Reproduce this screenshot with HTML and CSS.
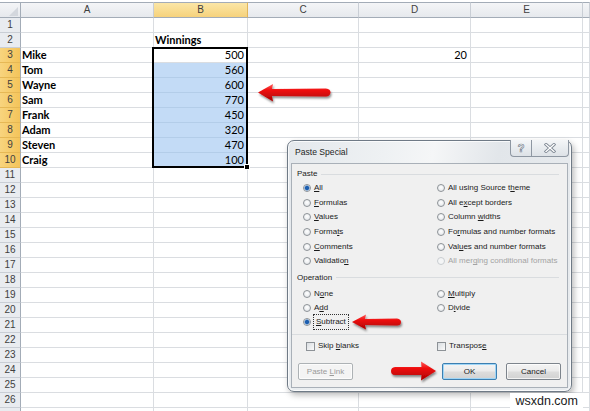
FILE: index.html
```html
<!DOCTYPE html>
<html>
<head>
<meta charset="utf-8">
<link rel="stylesheet" href="styles.css">
</head>
<body>
<div class="sheet">
  <div class="ch corner"></div><div class="ch">A</div><div class="ch on">B</div><div class="ch">C</div><div class="ch">D</div><div class="ch">E</div><div class="ch"></div>
  <div class="rh">1</div><div></div><div></div><div></div><div></div><div></div><div></div>
  <div class="rh">2</div><div></div><div class="b">Winnings</div><div></div><div></div><div></div><div></div>
  <div class="rh on">3</div><div class="b">Mike</div><div class="n act">500</div><div></div><div class="n">20</div><div></div><div></div>
  <div class="rh on">4</div><div class="b">Tom</div><div class="n sel">560</div><div></div><div></div><div></div><div></div>
  <div class="rh on">5</div><div class="b">Wayne</div><div class="n sel">600</div><div></div><div></div><div></div><div></div>
  <div class="rh on">6</div><div class="b">Sam</div><div class="n sel">770</div><div></div><div></div><div></div><div></div>
  <div class="rh on">7</div><div class="b">Frank</div><div class="n sel">450</div><div></div><div></div><div></div><div></div>
  <div class="rh on">8</div><div class="b">Adam</div><div class="n sel">320</div><div></div><div></div><div></div><div></div>
  <div class="rh on">9</div><div class="b">Steven</div><div class="n sel">470</div><div></div><div></div><div></div><div></div>
  <div class="rh on">10</div><div class="b">Craig</div><div class="n sel">100</div><div></div><div></div><div></div><div></div>
  <div class="rh">11</div><div></div><div></div><div></div><div></div><div></div><div></div>
  <div class="rh">12</div><div></div><div></div><div></div><div></div><div></div><div></div>
  <div class="rh">13</div><div></div><div></div><div></div><div></div><div></div><div></div>
  <div class="rh">14</div><div></div><div></div><div></div><div></div><div></div><div></div>
  <div class="rh">15</div><div></div><div></div><div></div><div></div><div></div><div></div>
  <div class="rh">16</div><div></div><div></div><div></div><div></div><div></div><div></div>
  <div class="rh">17</div><div></div><div></div><div></div><div></div><div></div><div></div>
  <div class="rh">18</div><div></div><div></div><div></div><div></div><div></div><div></div>
  <div class="rh">19</div><div></div><div></div><div></div><div></div><div></div><div></div>
  <div class="rh">20</div><div></div><div></div><div></div><div></div><div></div><div></div>
  <div class="rh">21</div><div></div><div></div><div></div><div></div><div></div><div></div>
  <div class="rh">22</div><div></div><div></div><div></div><div></div><div></div><div></div>
  <div class="rh">23</div><div></div><div></div><div></div><div></div><div></div><div></div>
  <div class="rh">24</div><div></div><div></div><div></div><div></div><div></div><div></div>
  <div class="rh">25</div><div></div><div></div><div></div><div></div><div></div><div></div>
  <div class="rh">26</div><div></div><div></div><div></div><div></div><div></div><div></div>
  <div class="rh"></div><div></div><div></div><div></div><div></div><div></div><div></div>
  <span class="selection"><span class="handle"></span></span>
</div>

<div class="dialog">
  <div class="titlebar">
    <span class="title">Paste Special</span>
    <div class="capbtns">
      <span class="capbtn help">?</span>
      <span class="capbtn close"><svg width="12" height="10" viewBox="0 0 12 10"><path d="M2 1.5 L10 8.5 M10 1.5 L2 8.5" stroke="#7d8793" stroke-width="3" stroke-linecap="square"/><path d="M2 1.5 L10 8.5 M10 1.5 L2 8.5" stroke="#fff" stroke-width="1.3" stroke-linecap="square"/></svg></span>
    </div>
  </div>
  <div class="panel">
    <div class="glabel">Paste</div>
    <div class="opts paste">
      <label class="opt"><span class="radio on"></span><span><u>A</u>ll</span></label>
      <label class="opt"><span class="radio"></span><span>All using Source t<u>h</u>eme</span></label>
      <label class="opt"><span class="radio"></span><span><u>F</u>ormulas</span></label>
      <label class="opt"><span class="radio"></span><span>All e<u>x</u>cept borders</span></label>
      <label class="opt"><span class="radio"></span><span><u>V</u>alues</span></label>
      <label class="opt"><span class="radio"></span><span>Column <u>w</u>idths</span></label>
      <label class="opt"><span class="radio"></span><span>Forma<u>t</u>s</span></label>
      <label class="opt"><span class="radio"></span><span>Fo<u>r</u>mulas and number formats</span></label>
      <label class="opt"><span class="radio"></span><span><u>C</u>omments</span></label>
      <label class="opt"><span class="radio"></span><span>Val<u>u</u>es and number formats</span></label>
      <label class="opt"><span class="radio"></span><span>Validatio<u>n</u></span></label>
      <label class="opt disabled"><span class="radio"></span><span>All mer<u>g</u>ing conditional formats</span></label>
    </div>
    <div class="glabel op">Operation</div>
    <div class="opts operation">
      <label class="opt"><span class="radio"></span><span>N<u>o</u>ne</span></label>
      <label class="opt"><span class="radio"></span><span><u>M</u>ultiply</span></label>
      <label class="opt"><span class="radio"></span><span>A<u>d</u>d</span></label>
      <label class="opt"><span class="radio"></span><span>D<u>i</u>vide</span></label>
      <label class="opt"><span class="radio on"></span><span class="focus"><u>S</u>ubtract</span></label>
    </div>
    <div class="sep"></div>
    <div class="checks">
      <label class="opt"><span class="check"></span><span>Skip <u>b</u>lanks</span></label>
      <label class="opt"><span class="check"></span><span>Transpos<u>e</u></span></label>
    </div>
    <div class="buttons">
      <span class="btn disabled"><span>Paste <u>L</u>ink</span></span>
      <span class="spacer"></span>
      <span class="btn default">OK</span>
      <span class="btn">Cancel</span>
    </div>
  </div>
</div>

<svg class="arrows" width="590" height="411" viewBox="0 0 590 411">
  <defs>
    <linearGradient id="red" x1="0" y1="0" x2="0" y2="1">
      <stop offset="0" stop-color="#ff5a5a"/>
      <stop offset="0.35" stop-color="#f01010"/>
      <stop offset="1" stop-color="#a80000"/>
    </linearGradient>
    <filter id="sh" x="-20%" y="-50%" width="140%" height="200%">
      <feDropShadow dx="1" dy="2" stdDeviation="1.2" flood-color="#000" flood-opacity="0.45"/>
    </filter>
  </defs>
  <path filter="url(#sh)" fill="url(#red)" d="M258,92.5 L273,84 L272,89 L326,88.5 Q330.5,89 330.5,92.5 Q330,96.5 326,96.5 L272,96 L273,101.5 Z"/>
  <path filter="url(#sh)" fill="url(#red)" d="M352,322 L366,314.5 L365,319 L397,318.5 Q401,319 401,322 Q401,325.5 397,325.5 L365,325 L366,329.5 Z"/>
  <path filter="url(#sh)" fill="url(#red)" d="M436,371 L421,361.5 L421.5,367 L395,367 Q391,367.5 391,371 Q391,375 395,375 L421.5,375 L421,380.5 Z"/>
</svg>

<div class="watermark">wsxdn.com</div>
</body>
</html>
```
FILE: styles.css
```css
* { box-sizing: border-box; margin: 0; padding: 0; }
html, body { width: 590px; height: 411px; overflow: hidden; }
body {
  position: relative;
  background: #fff;
  padding-top: 2px;
  font-family: "Lato", "Liberation Sans", sans-serif;
}

/* ---------- spreadsheet ---------- */
.sheet {
  position: relative;
  display: grid;
  grid-template-columns: 21px 133px 94px 111px 112px 112px 7px;
  grid-template-rows: 16px;
  grid-auto-rows: 15px;
  font-size: 11px;
  color: #000;
}
.sheet > div {
  border-right: 1px solid #dadde1;
  border-bottom: 1px solid #dadde1;
  line-height: 14px;
  white-space: nowrap;
  overflow: hidden;
  padding: 0 2px;
}
.sheet > .ch {
  background: linear-gradient(#f4f5f7, #e6e9ed);
  border-top: 1px solid #a3acb7;
  border-right-color: #c9ced5;
  border-bottom-color: #a3acb7;
  text-align: center;
  color: #3f3f3f;
  font-family: "Liberation Sans", sans-serif;
  font-size: 10px;
  line-height: 14px;
}
.sheet > .ch.on { background: linear-gradient(#fbe6a6, #f6d27c); border-right-color: #e1b55a; }
.sheet > .corner { position: relative; border-right-color: #a3acb7; }
.sheet > .corner::after {
  content: "";
  position: absolute;
  right: 2px; bottom: 1px;
  width: 0; height: 0;
  border-left: 9px solid transparent;
  border-bottom: 9px solid #d3d7dd;
}
.sheet > .rh {
  background: #e9ecf0;
  border-right-color: #a3acb7;
  border-bottom-color: #c9ced5;
  text-align: center;
  color: #3f3f3f;
  font-family: "Liberation Sans", sans-serif;
  font-size: 10px;
  padding: 0;
}
.sheet > .rh.on { background: linear-gradient(90deg, #f8d47e, #f4c45a); border-bottom-color: #e6b855; }
.sheet > .b { font-weight: bold; padding-left: 1px; overflow: visible; }
.sheet > .n { text-align: right; padding-right: 3px; }
.sheet > .sel { background: #c3dbf6; border-bottom-color: #b3cde9; }
.sheet > .act { background: #fff; }

.selection {
  position: absolute;
  grid-column: 3 / 4;
  grid-row: 4 / 12;
  top: -1px; left: -2px; right: 0; bottom: 0;
  border: 2px solid #000;
  pointer-events: none;
}
.handle {
  position: absolute;
  right: -4px; bottom: -4px;
  width: 6px; height: 6px;
  background: #000;
  border: 1px solid #fff;
}

/* ---------- dialog ---------- */
.dialog {
  position: absolute;
  left: 287px; top: 140px;
  width: 285px; height: 252px;
  border: 1px solid #6f7a86;
  border-radius: 7px;
  background: linear-gradient(100deg, #e4e8ec 0%, #eef1f3 30%, #f5f6f7 45%, #e2e6ea 65%, #e9ecef 100%);
  box-shadow: inset 0 0 0 1px rgba(255,255,255,.75), 2px 3px 6px rgba(0,0,0,.28);
  font-family: "Liberation Sans", sans-serif;
  font-size: 8px;
  color: #1b1b1b;
  display: flex;
  flex-direction: column;
}
.titlebar {
  height: 22px;
  display: flex;
  justify-content: space-between;
  align-items: flex-start;
  padding: 0 2px 0 7px;
}
.title { font-size: 8.6px; line-height: 22px; color: #1e1e1e; }
.capbtns { display: flex; margin-top: -1px; }
.capbtn {
  height: 17px;
  border: 1px solid #8e97a2;
  border-top: none;
  background: linear-gradient(#f4f6f8, #dde2e7);
  display: flex; align-items: center; justify-content: center;
}
.capbtn.help {
  width: 21px;
  border-right: none;
  border-bottom-left-radius: 4px;
  font-weight: bold;
  font-size: 11px;
  color: #fff;
  -webkit-text-stroke: 0.7px #7d8793;
}
.capbtn.close { width: 38px; border-bottom-right-radius: 4px; }

.panel {
  margin: 0 3px;
  height: 225px;
  border: 1px solid #a9b0b8;
  background: #f0f0f0;
  display: flex;
  flex-direction: column;
}
.glabel {
  display: flex;
  align-items: center;
  height: 14px;
  margin-top: 3px;
  padding: 0 8px 0 5px;
  line-height: 14px;
}
.glabel::after {
  content: "";
  flex: 1;
  margin-left: 4px;
  border-top: 1px solid #d9dcdf;
}
.glabel.op { margin-top: 2px; }

.opts {
  display: grid;
  grid-template-columns: 134px 1fr;
  padding-left: 11px;
}
.paste { grid-auto-rows: 14.6px; }
.operation { grid-auto-rows: 14.2px; margin-top: 2px; }
.opt {
  display: flex;
  align-items: center;
  white-space: nowrap;
  line-height: 12px;
}
.opt.disabled { color: #a3a3a3; }
.radio {
  width: 8px; height: 8px;
  border-radius: 50%;
  border: 1px solid #8d9297;
  background: radial-gradient(circle at 50% 40%, #ffffff, #dde1e5);
  margin-right: 3px;
  flex: none;
}
.radio.on {
  background: radial-gradient(circle, #1f5fae 0 1.6px, #6f9fd8 2.3px, #e9eff7 3px);
}
.disabled .radio { border-color: #c9cdd1; background: #f4f5f6; }
.focus { outline: 1px dotted #333; outline-offset: 1px; padding: 0 1px; margin-left: 1px; }

.sep { margin: 5px 0 0; border-top: 1px solid #d9dcdf; }
.checks {
  display: grid;
  grid-template-columns: 131px 1fr;
  padding-left: 14px;
  margin-top: 4px;
  height: 14px;
}
.check {
  width: 9px; height: 9px;
  border: 1px solid #8d9297;
  background: linear-gradient(135deg, #d9dde1, #fbfbfb);
  margin-right: 3px;
  flex: none;
}
.buttons {
  display: flex;
  gap: 9px;
  padding: 0 6px;
  margin-top: 10px;
}
.spacer { flex: 1; }
.btn {
  width: 55px; height: 17px;
  border: 1px solid #7d848c;
  border-radius: 2px;
  background: linear-gradient(#f4f4f4 0%, #ebebeb 48%, #dddddd 52%, #d2d2d2 100%);
  box-shadow: inset 0 0 0 1px rgba(255,255,255,.7);
  display: flex; align-items: center; justify-content: center;
  color: #1b1b1b;
}
.btn.default { border-color: #3c7fb1; box-shadow: inset 0 0 0 1px #9fd5f6; }
.btn.disabled { color: #9a9a9a; border-color: #adb2b5; background: #f4f4f4; }

/* ---------- overlays ---------- */
.arrows { position: absolute; left: 0; top: 0; pointer-events: none; }
.watermark {
  position: absolute;
  right: 7px; bottom: 0;
  padding: 2px 5px 3px;
  background: #fff;
  font-family: "Liberation Sans", sans-serif;
  font-size: 12.5px;
  color: #1a1a1a;
  line-height: 13px;
}
```
